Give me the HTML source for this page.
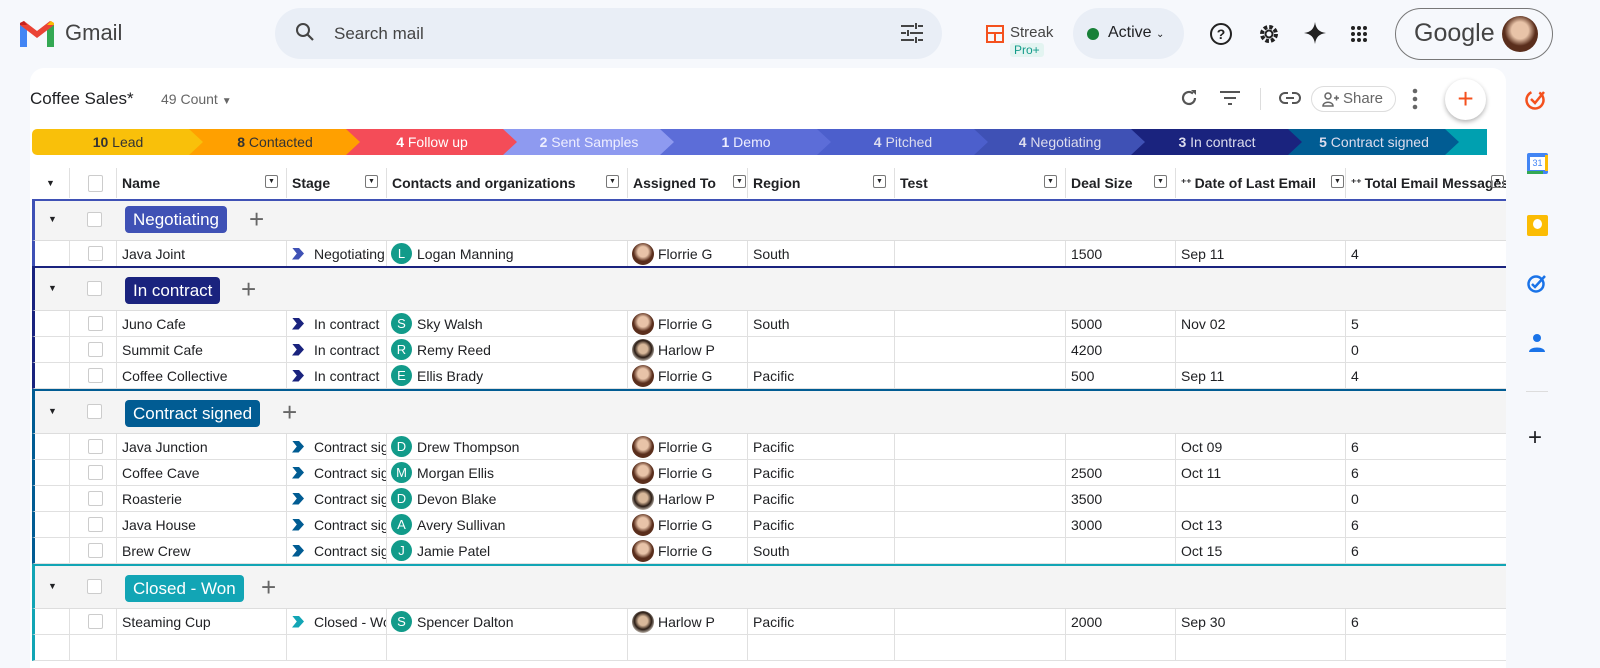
<!DOCTYPE html>
<html><head><meta charset="utf-8"><style>
*{box-sizing:border-box;margin:0;padding:0}
body{width:1600px;height:650px;overflow:hidden;background:#f6f8fc;font-family:"Liberation Sans",Arial,sans-serif;color:#202124;position:relative}
.abs{position:absolute}
.search{left:275px;top:8px;width:667px;height:51px;border-radius:26px;background:#e9eef6}
.panel{left:30px;top:68px;width:1476px;height:600px;background:#fff;border-radius:14px 14px 0 0;overflow:hidden}
.seg{position:absolute;top:129px;height:26px;font-size:14px;line-height:26px;text-align:center;clip-path:polygon(0 0,calc(100% - 14px) 0,100% 50%,calc(100% - 14px) 100%,0 100%,14px 50%)}
.seg b{font-weight:bold}
.row{position:absolute;left:32px;width:1474px;display:flex;font-size:14px;border-bottom:1px solid #e0e0e0;background:#fff}
.row>div{border-right:1px solid #e0e0e0;padding-left:5px;white-space:nowrap;overflow:hidden;display:flex;align-items:center;flex-shrink:0}
.c0{width:38px}.c1{width:47px;justify-content:center}.c2{width:170px}.c3{width:100px}.c4{width:241px}.c5{width:120px}.c6{width:147px}.c7{width:171px}.c8{width:110px}.c9{width:170px}.c10{width:160px;border-right:none!important}
.cb{width:15px;height:15px;border:1px solid #ccc;border-radius:2px;background:#fff;flex-shrink:0}
.grp{position:absolute;left:32px;width:1474px;background:#f4f4f4;border-bottom:1px solid #ddd}
.tag{position:absolute;left:90px;top:5px;height:27px;border-radius:4px;color:#fff;font-size:17px;line-height:27px;padding:0 8px}
.av{width:21px;height:21px;border-radius:50%;background:#129b8a;color:#fff;font-size:13px;display:inline-flex;align-items:center;justify-content:center;margin-right:5px;margin-left:-1px;flex-shrink:0}
.ph{width:22px;height:22px;border-radius:50%;background:radial-gradient(circle at 50% 40%,#e8c3a8 30%,#5a2e1c 55%);margin-right:4px;margin-left:-1px;flex-shrink:0}
.ph2{background:radial-gradient(circle at 50% 45%,#d8b89a 28%,#2a1c14 52%,#e9e2d8 80%)}
.chev{width:12px;height:12px;margin-right:10px;flex-shrink:0;clip-path:polygon(0 0,55% 0,100% 50%,55% 100%,0 100%,40% 50%)}
.hd{position:absolute;left:32px;top:168px;width:1474px;height:30px;display:flex;font-size:14px;font-weight:bold}
.hd>div{border-right:1px solid #e0e0e0;padding-left:5px;white-space:nowrap;overflow:hidden;display:flex;align-items:center;position:relative;flex-shrink:0}
.dd{position:absolute;right:8px;top:7px;width:13px;height:13px;border:1px solid #777;border-radius:2px;font-size:7px;line-height:11px;text-align:center;font-weight:normal}
</style></head><body>
<svg class="abs" style="left:20px;top:21px" width="34" height="26" viewBox="0 0 34 26"><rect x="0" y="4" width="7" height="22" fill="#4285f4"/><rect x="27" y="4" width="7" height="22" fill="#34a853"/><path d="M0 4l17 13L34 4V2L30 0 17 10 4 0 0 2z" fill="#ea4335"/><path d="M27 4l4-4 3 2v2h-7z" fill="#fbbc04"/><path d="M0 2l4-2 3 4H0z" fill="#c5221f"/></svg>
<div class="abs" style="left:65px;top:20px;font-size:22px;color:#444">Gmail</div>
<div class="abs search"></div>
<svg class="abs" style="left:295px;top:22px" width="20" height="20" viewBox="0 0 20 20"><circle cx="8" cy="8" r="6" fill="none" stroke="#444" stroke-width="2"/><path d="M12.5 12.5L18 18" stroke="#444" stroke-width="2.2"/></svg>
<div class="abs" style="left:334px;top:24px;font-size:17px;color:#444">Search mail</div>
<svg class="abs" style="left:901px;top:23px" width="22" height="20" viewBox="0 0 22 20"><g stroke="#444" stroke-width="2"><path d="M0 3h13M17 3h5M15 0v6M0 10h5M9 10h13M7 7v6M0 17h13M17 17h5M15 14v6"/></g></svg>
<svg class="abs" style="left:986px;top:25px" width="18" height="18" viewBox="0 0 18 18"><rect x="1" y="1" width="16" height="16" fill="none" stroke="#f4511e" stroke-width="2"/><path d="M1 8h16M9 8v9" stroke="#f4511e" stroke-width="2"/></svg>
<div class="abs" style="left:1010px;top:24px;font-size:15px;color:#444">Streak</div>
<div class="abs" style="left:1010px;top:43px;font-size:12px;color:#129b8a;background:#e3f4f1;padding:0 4px;border-radius:3px">Pro+</div>
<div class="abs" style="left:1073px;top:8px;width:111px;height:51px;border-radius:26px;background:#e9eef6"></div>
<div class="abs" style="left:1087px;top:28px;width:12px;height:12px;border-radius:50%;background:#188038"></div>
<div class="abs" style="left:1108px;top:24px;font-size:16px;color:#202124">Active <span style="font-size:10px">⌄</span></div>
<svg class="abs" style="left:1209px;top:22px" width="24" height="24" viewBox="0 0 24 24"><circle cx="12" cy="12" r="10" fill="none" stroke="#222" stroke-width="2"/><text x="12" y="17" font-size="14" text-anchor="middle" font-family="Liberation Sans" font-weight="bold" fill="#222">?</text></svg>
<svg class="abs" style="left:1257px;top:22px" width="24" height="24" viewBox="0 0 24 24"><circle cx="12" cy="12" r="7" fill="none" stroke="#222" stroke-width="4" stroke-dasharray="3.5 2"/><circle cx="12" cy="12" r="3.5" fill="none" stroke="#222" stroke-width="2"/></svg>
<svg class="abs" style="left:1303px;top:21px" width="24" height="24" viewBox="0 0 24 24"><path d="M12 1C13 8 16 11 23 12 16 13 13 16 12 23 11 16 8 13 1 12 8 11 11 8 12 1z" fill="#222"/></svg>
<svg class="abs" style="left:1350px;top:25px" width="18" height="18" viewBox="0 0 18 18" fill="#222"><circle cx="3" cy="3" r="2"/><circle cx="9" cy="3" r="2"/><circle cx="15" cy="3" r="2"/><circle cx="3" cy="9" r="2"/><circle cx="9" cy="9" r="2"/><circle cx="15" cy="9" r="2"/><circle cx="3" cy="15" r="2"/><circle cx="9" cy="15" r="2"/><circle cx="15" cy="15" r="2"/></svg>
<div class="abs" style="left:1395px;top:8px;width:158px;height:52px;border-radius:26px;border:1px solid #777;background:#f6f8fc"></div>
<div class="abs" style="left:1414px;top:19px;font-size:25px;color:#444">Google</div>
<div class="abs ph" style="left:1503px;top:16px;width:36px;height:36px"></div>
<svg class="abs" style="left:1524px;top:87px" width="24" height="24" viewBox="0 0 24 24"><circle cx="11" cy="13" r="8.5" fill="none" stroke="#f4511e" stroke-width="2.5" stroke-dasharray="45 10" transform="rotate(-60 11 13)"/><path d="M7 12l4 4 9-11" fill="none" stroke="#f4511e" stroke-width="2.5"/></svg>
<div class="abs" style="left:1527px;top:153px;width:21px;height:21px;background:#4285f4;border-radius:2px"><div style="position:absolute;left:3px;top:4px;width:15px;height:13px;background:#fff;font-size:9px;color:#4285f4;text-align:center;line-height:13px">31</div><div style="position:absolute;left:0;bottom:0;width:16px;height:3px;background:#34a853"></div><div style="position:absolute;right:0;top:2px;width:3px;height:16px;background:#fbbc04"></div></div>
<div class="abs" style="left:1527px;top:215px;width:21px;height:21px;background:#fbbc04;border-radius:2px"><div style="position:absolute;left:6px;top:4px;width:9px;height:10px;border-radius:50%;background:#fff"></div></div>
<svg class="abs" style="left:1526px;top:272px" width="22" height="22" viewBox="0 0 22 22"><circle cx="10" cy="12" r="7.5" fill="none" stroke="#1a73e8" stroke-width="2.5"/><path d="M6 12l3 3 10-11" fill="none" stroke="#1a73e8" stroke-width="2.5"/></svg>
<svg class="abs" style="left:1528px;top:333px" width="18" height="20" viewBox="0 0 18 20"><circle cx="9" cy="5" r="4" fill="#1a73e8"/><path d="M1 19c0-6 16-6 16 0z" fill="#1a73e8"/></svg>
<div class="abs" style="left:1526px;top:391px;width:22px;height:1px;background:#ddd"></div>
<div class="abs" style="left:1528px;top:426px;font-size:24px;line-height:24px">+</div>
<div class="abs panel"></div>
<div class="abs" style="left:30px;top:89px;font-size:17px">Coffee Sales*</div>
<div class="abs" style="left:161px;top:91px;font-size:14px;color:#666">49 Count <span style="font-size:10px">▼</span></div>
<svg class="abs" style="left:1179px;top:88px" width="20" height="20" viewBox="0 0 20 20"><path d="M16 10a6 6 0 1 1-2-4.5" fill="none" stroke="#555" stroke-width="2.2"/><path d="M12 2l5 0 0 5z" fill="#555"/></svg>
<svg class="abs" style="left:1219px;top:90px" width="22" height="16" viewBox="0 0 22 16"><path d="M1 2h20M5 8h12M9 14h4" stroke="#555" stroke-width="2"/></svg>
<div class="abs" style="left:1260px;top:88px;width:1px;height:22px;background:#ddd"></div>
<svg class="abs" style="left:1279px;top:90px" width="22" height="16" viewBox="0 0 22 16"><rect x="1" y="3" width="20" height="10" rx="5" fill="none" stroke="#555" stroke-width="2"/><path d="M7 8h8" stroke="#555" stroke-width="2"/><rect x="9" y="1" width="4" height="4" fill="#fff"/><rect x="9" y="11" width="4" height="4" fill="#fff"/></svg>
<div class="abs" style="left:1311px;top:86px;width:85px;height:26px;border:1px solid #ddd;border-radius:13px;font-size:15px;color:#666;line-height:24px;padding-left:31px">Share</div>
<svg class="abs" style="left:1322px;top:91px" width="18" height="16" viewBox="0 0 18 16"><circle cx="6" cy="5" r="3" fill="none" stroke="#666" stroke-width="1.5"/><path d="M1 15c0-5 10-5 10 0z" fill="none" stroke="#666" stroke-width="1.5"/><path d="M12 7h5M14.5 4.5v5" stroke="#666" stroke-width="1.5"/></svg>
<svg class="abs" style="left:1412px;top:88px" width="6" height="22" viewBox="0 0 6 22" fill="#666"><circle cx="3" cy="3" r="2.3"/><circle cx="3" cy="11" r="2.3"/><circle cx="3" cy="19" r="2.3"/></svg>
<div class="abs" style="left:1445px;top:79px;width:41px;height:41px;border-radius:50%;background:#fff;box-shadow:0 2px 5px rgba(0,0,0,.3);color:#f4511e;font-size:28px;text-align:center;line-height:39px;font-weight:300">+</div>
<div class="seg" style="left:32px;width:172px;background:#f9c00a;color:#333;clip-path:polygon(0 0,calc(100% - 14px) 0,100% 50%,calc(100% - 14px) 100%,0 100%);border-radius:5px 0 0 5px"><b>10</b> Lead</div>
<div class="seg" style="left:189px;width:172px;background:#ffa000;color:#333"><b>8</b> Contacted</div>
<div class="seg" style="left:346px;width:172px;background:#f44c58;color:#fff"><b>4</b> Follow up</div>
<div class="seg" style="left:503px;width:172px;background:#8e9af0;color:#eef"><b>2</b> Sent Samples</div>
<div class="seg" style="left:660px;width:172px;background:#5c6dd8;color:#eef"><b>1</b> Demo</div>
<div class="seg" style="left:817px;width:172px;background:#4c5fcc;color:#dde"><b>4</b> Pitched</div>
<div class="seg" style="left:974px;width:172px;background:#3f51b5;color:#dde"><b>4</b> Negotiating</div>
<div class="seg" style="left:1131px;width:172px;background:#1a237e;color:#dde"><b>3</b> In contract</div>
<div class="seg" style="left:1288px;width:172px;background:#015c93;color:#dde"><b>5</b> Contract signed</div>
<div class="seg" style="left:1445px;width:42px;background:#00a0b0;clip-path:polygon(0 0,100% 0,100% 100%,0 100%,14px 50%)"></div>
<div class="hd">
<div class="c0" style="justify-content:center;font-size:9px;padding:0">▼</div>
<div class="c1"><div class="cb" style="height:17px"></div></div>
<div class="c2">Name<span class="dd">▼</span></div>
<div class="c3">Stage<span class="dd">▼</span></div>
<div class="c4">Contacts and organizations<span class="dd">▼</span></div>
<div class="c5">Assigned To<span class="dd" style="right:1px">▼</span></div>
<div class="c6">Region<span class="dd">▼</span></div>
<div class="c7">Test<span class="dd">▼</span></div>
<div class="c8">Deal Size<span class="dd">▼</span></div>
<div class="c9"><span style="font-size:10px;margin-right:3px">⁺⁺</span>Date of Last Email<span class="dd" style="right:1px">▼</span></div>
<div class="c10"><span style="font-size:10px;margin-right:3px">⁺⁺</span>Total Email Messages<span class="dd" style="right:2px">▼</span></div>
</div>

<div class="grp" style="top:199px;height:42px;border-top:2px solid #3f51b5;border-left:3px solid #3f51b5"><span style="position:absolute;left:13px;top:13px;font-size:9px">▼</span><div class="cb" style="position:absolute;left:52px;top:11px"></div><div class="tag" style="background:#3f51b5">Negotiating</div><span style="position:absolute;left:214px;top:3px;font-size:26px;color:#666;font-weight:300">+</span></div>
<div class="row" style="top:241px;height:26px;border-left:3px solid #3f51b5"><div class="c0" style="width:35px"></div><div class="c1"><div class="cb"></div></div><div class="c2">Java Joint</div><div class="c3"><span class="chev" style="background:#3f51b5"></span>Negotiating</div><div class="c4"><span class="av">L</span>Logan Manning</div><div class="c5"><span class="ph"></span>Florrie G</div><div class="c6">South</div><div class="c7"></div><div class="c8">1500</div><div class="c9">Sep 11</div><div class="c10">4</div></div>

<div class="grp" style="top:266px;height:45px;border-top:2px solid #1a237e;border-left:3px solid #1a237e"><span style="position:absolute;left:13px;top:15px;font-size:9px">▼</span><div class="cb" style="position:absolute;left:52px;top:13px"></div><div class="tag" style="background:#1a237e;top:9px">In contract</div><span style="position:absolute;left:206px;top:6px;font-size:26px;color:#666;font-weight:300">+</span></div>
<div class="row" style="top:311px;height:26px;border-left:3px solid #1a237e"><div class="c0" style="width:35px"></div><div class="c1"><div class="cb"></div></div><div class="c2">Juno Cafe</div><div class="c3"><span class="chev" style="background:#1a237e"></span>In contract</div><div class="c4"><span class="av">S</span>Sky Walsh</div><div class="c5"><span class="ph"></span>Florrie G</div><div class="c6">South</div><div class="c7"></div><div class="c8">5000</div><div class="c9">Nov 02</div><div class="c10">5</div></div>
<div class="row" style="top:337px;height:26px;border-left:3px solid #1a237e"><div class="c0" style="width:35px"></div><div class="c1"><div class="cb"></div></div><div class="c2">Summit Cafe</div><div class="c3"><span class="chev" style="background:#1a237e"></span>In contract</div><div class="c4"><span class="av">R</span>Remy Reed</div><div class="c5"><span class="ph ph2"></span>Harlow P</div><div class="c6"></div><div class="c7"></div><div class="c8">4200</div><div class="c9"></div><div class="c10">0</div></div>
<div class="row" style="top:363px;height:26px;border-left:3px solid #1a237e"><div class="c0" style="width:35px"></div><div class="c1"><div class="cb"></div></div><div class="c2">Coffee Collective</div><div class="c3"><span class="chev" style="background:#1a237e"></span>In contract</div><div class="c4"><span class="av">E</span>Ellis Brady</div><div class="c5"><span class="ph"></span>Florrie G</div><div class="c6">Pacific</div><div class="c7"></div><div class="c8">500</div><div class="c9">Sep 11</div><div class="c10">4</div></div>

<div class="grp" style="top:389px;height:45px;border-top:2px solid #015c93;border-left:3px solid #015c93"><span style="position:absolute;left:13px;top:15px;font-size:9px">▼</span><div class="cb" style="position:absolute;left:52px;top:13px"></div><div class="tag" style="background:#015c93;top:9px">Contract signed</div><span style="position:absolute;left:247px;top:6px;font-size:26px;color:#666;font-weight:300">+</span></div>
<div class="row" style="top:434px;height:26px;border-left:3px solid #015c93"><div class="c0" style="width:35px"></div><div class="c1"><div class="cb"></div></div><div class="c2">Java Junction</div><div class="c3"><span class="chev" style="background:#015c93"></span>Contract signed</div><div class="c4"><span class="av">D</span>Drew Thompson</div><div class="c5"><span class="ph"></span>Florrie G</div><div class="c6">Pacific</div><div class="c7"></div><div class="c8"></div><div class="c9">Oct 09</div><div class="c10">6</div></div>
<div class="row" style="top:460px;height:26px;border-left:3px solid #015c93"><div class="c0" style="width:35px"></div><div class="c1"><div class="cb"></div></div><div class="c2">Coffee Cave</div><div class="c3"><span class="chev" style="background:#015c93"></span>Contract signed</div><div class="c4"><span class="av">M</span>Morgan Ellis</div><div class="c5"><span class="ph"></span>Florrie G</div><div class="c6">Pacific</div><div class="c7"></div><div class="c8">2500</div><div class="c9">Oct 11</div><div class="c10">6</div></div>
<div class="row" style="top:486px;height:26px;border-left:3px solid #015c93"><div class="c0" style="width:35px"></div><div class="c1"><div class="cb"></div></div><div class="c2">Roasterie</div><div class="c3"><span class="chev" style="background:#015c93"></span>Contract signed</div><div class="c4"><span class="av">D</span>Devon Blake</div><div class="c5"><span class="ph ph2"></span>Harlow P</div><div class="c6">Pacific</div><div class="c7"></div><div class="c8">3500</div><div class="c9"></div><div class="c10">0</div></div>
<div class="row" style="top:512px;height:26px;border-left:3px solid #015c93"><div class="c0" style="width:35px"></div><div class="c1"><div class="cb"></div></div><div class="c2">Java House</div><div class="c3"><span class="chev" style="background:#015c93"></span>Contract signed</div><div class="c4"><span class="av">A</span>Avery Sullivan</div><div class="c5"><span class="ph"></span>Florrie G</div><div class="c6">Pacific</div><div class="c7"></div><div class="c8">3000</div><div class="c9">Oct 13</div><div class="c10">6</div></div>
<div class="row" style="top:538px;height:26px;border-left:3px solid #015c93"><div class="c0" style="width:35px"></div><div class="c1"><div class="cb"></div></div><div class="c2">Brew Crew</div><div class="c3"><span class="chev" style="background:#015c93"></span>Contract signed</div><div class="c4"><span class="av">J</span>Jamie Patel</div><div class="c5"><span class="ph"></span>Florrie G</div><div class="c6">South</div><div class="c7"></div><div class="c8"></div><div class="c9">Oct 15</div><div class="c10">6</div></div>

<div class="grp" style="top:564px;height:45px;border-top:2px solid #12a5b5;border-left:3px solid #12a5b5"><span style="position:absolute;left:13px;top:15px;font-size:9px">▼</span><div class="cb" style="position:absolute;left:52px;top:13px"></div><div class="tag" style="background:#12a5b5;top:9px">Closed - Won</div><span style="position:absolute;left:226px;top:6px;font-size:26px;color:#666;font-weight:300">+</span></div>
<div class="row" style="top:609px;height:26px;border-left:3px solid #12a5b5"><div class="c0" style="width:35px"></div><div class="c1"><div class="cb"></div></div><div class="c2">Steaming Cup</div><div class="c3"><span class="chev" style="background:#12a5b5"></span>Closed - Won</div><div class="c4"><span class="av">S</span>Spencer Dalton</div><div class="c5"><span class="ph ph2"></span>Harlow P</div><div class="c6">Pacific</div><div class="c7"></div><div class="c8">2000</div><div class="c9">Sep 30</div><div class="c10">6</div></div>
<div class="row" style="top:635px;height:26px;border-left:3px solid #12a5b5"><div class="c0" style="width:35px"></div><div class="c1"></div><div class="c2"></div><div class="c3"></div><div class="c4"></div><div class="c5"></div><div class="c6"></div><div class="c7"></div><div class="c8"></div><div class="c9"></div><div class="c10"></div></div>
</body></html>
